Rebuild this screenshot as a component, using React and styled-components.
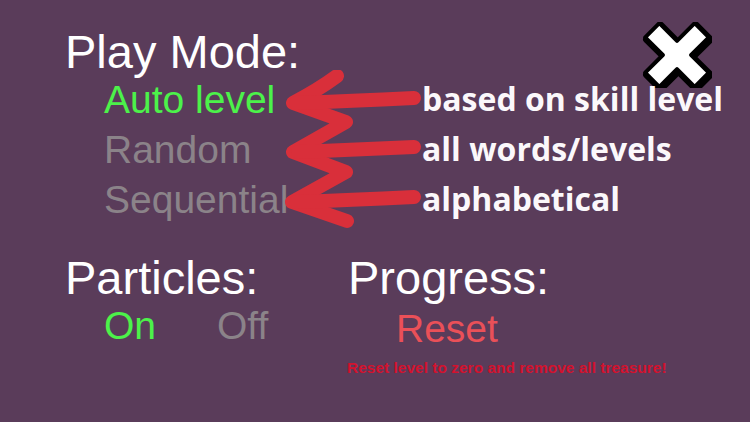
import styled, { createGlobalStyle } from 'styled-components';

const GlobalStyle = createGlobalStyle`
  html, body {
    margin: 0;
    padding: 0;
    background: #5a3c5a;
  }
`;

const modes = [
  { label: 'Auto level', note: 'based on skill level', active: true },
  { label: 'Random', note: 'all words/levels' },
  { label: 'Sequential', note: 'alphabetical' },
];

const Page = styled.div`
  width: 750px;
  height: 422px;
  box-sizing: border-box;
  padding: 22px 0 0 65px;
  background: #5a3c5a;
  font-family: 'Liberation Sans', Arial, sans-serif;
  overflow: hidden;
`;

const TopRow = styled.div`
  display: flex;
  position: relative;
`;

const ModeColumn = styled.div`
  width: 357px;
  padding-top: 7px;
`;

const Heading = styled.h2`
  margin: 0;
  font-size: 47px;
  line-height: 46px;
  font-weight: 400;
  color: #ffffff;
  white-space: nowrap;
`;

const OptionList = styled.div`
  display: flex;
  flex-direction: column;
  padding-left: 39px;
`;

const Option = styled.div`
  font-size: 39px;
  line-height: 50px;
  color: ${(p) => (p.$active ? '#4cf24a' : '#8b8389')};
  white-space: nowrap;
`;

const NotesColumn = styled.div`
  flex: 1;
  display: flex;
  flex-direction: column;
`;

const CloseButton = styled.button`
  align-self: flex-end;
  margin: 0 38px -14px 0;
  padding: 0;
  width: 70px;
  height: 66px;
  border: none;
  background: none;
  cursor: pointer;
`;

const Note = styled.div`
  font-family: 'Open Sans', 'Noto Sans', sans-serif;
  font-weight: 700;
  font-size: 32px;
  line-height: 50px;
  color: #fbf8fb;
  white-space: nowrap;
`;

const Arrows = styled.svg`
  position: absolute;
  left: 215px;
  top: 48px;
  pointer-events: none;
`;

const BottomRow = styled.div`
  display: grid;
  grid-template-columns: 283px auto;
  margin-top: 30px;
`;

const ToggleRow = styled.div`
  display: flex;
  gap: 61px;
  padding-left: 39px;
`;

const ResetButton = styled.div`
  margin-top: 3px;
  padding-left: 48px;
  font-size: 39px;
  line-height: 50px;
  color: #ea5058;
`;

const Warning = styled.div`
  margin: 6px 0 0 -1px;
  font-size: 15.5px;
  line-height: 16px;
  font-weight: 700;
  color: #d3122e;
  white-space: nowrap;
`;

const CloseIcon = () => {
  const plus =
    'M-10,-35 L10,-35 L10,-10 L35,-10 L35,10 L10,10 L10,35 L-10,35 L-10,10 L-35,10 L-35,-10 L-10,-10 Z';
  return (
    <svg width="70" height="66" viewBox="0 0 70 66">
      <g transform="translate(35 33) rotate(45)">
        <path d={plus} transform="translate(2.5 0.5)" fill="#000" stroke="#000" strokeWidth="7" strokeLinejoin="round" />
        <path d={plus} fill="#fff" stroke="#000" strokeWidth="4" strokeLinejoin="round" />
      </g>
    </svg>
  );
};

const ArrowScribble = () => (
  // page coords offset by (280, 70)
  <Arrows width="145" height="165" viewBox="280 70 145 165">
    <g fill="none" stroke="#d92f3a" strokeWidth="14" strokeLinecap="round" strokeLinejoin="round">
      <path d="M337,76 Q318,90 293,103 L346,122 L293,152 L346,172 L292,202 L347,221" />
      <path d="M296,103 Q350,101 414,98" />
      <path d="M298,152 Q350,150 414,147" />
      <path d="M296,202 Q350,200 414,197" />
    </g>
  </Arrows>
);

export default function App() {
  return (
    <Page>
      <GlobalStyle />
      <TopRow>
        <ModeColumn>
          <Heading>Play Mode:</Heading>
          <OptionList>
            {modes.map((m) => (
              <Option key={m.label} $active={m.active}>
                {m.label}
              </Option>
            ))}
          </OptionList>
        </ModeColumn>
        <NotesColumn>
          <CloseButton aria-label="Close">
            <CloseIcon />
          </CloseButton>
          {modes.map((m) => (
            <Note key={m.note}>{m.note}</Note>
          ))}
        </NotesColumn>
        <ArrowScribble />
      </TopRow>

      <BottomRow>
        <div>
          <Heading>Particles:</Heading>
          <ToggleRow>
            <Option $active>On</Option>
            <Option>Off</Option>
          </ToggleRow>
        </div>
        <div>
          <Heading>Progress:</Heading>
          <ResetButton>Reset</ResetButton>
          <Warning>Reset level to zero and remove all treasure!</Warning>
        </div>
      </BottomRow>
    </Page>
  );
}
